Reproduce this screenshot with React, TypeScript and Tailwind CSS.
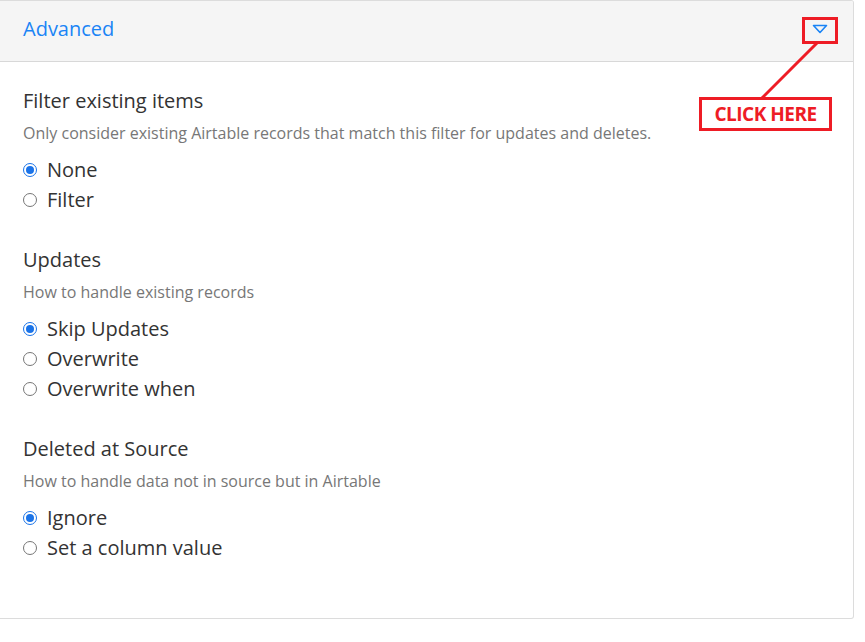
import React from "react";

type Section = { title: string; desc: string; options: string[]; selected: number };

const sections: Section[] = [
  {
    title: "Filter existing items",
    desc: "Only consider existing Airtable records that match this filter for updates and deletes.",
    options: ["None", "Filter"],
    selected: 0,
  },
  {
    title: "Updates",
    desc: "How to handle existing records",
    options: ["Skip Updates", "Overwrite", "Overwrite when"],
    selected: 0,
  },
  {
    title: "Deleted at Source",
    desc: "How to handle data not in source but in Airtable",
    options: ["Ignore", "Set a column value"],
    selected: 0,
  },
];

const Radio = ({ checked }: { checked: boolean }) =>
  checked ? (
    <span className="w-[14px] h-[14px] rounded-full border-[1.5px] border-[#1a73e8] flex items-center justify-center shrink-0">
      <span className="w-[8px] h-[8px] rounded-full bg-[#1a73e8]" />
    </span>
  ) : (
    <span className="w-[14px] h-[14px] rounded-full border border-[#767676] shrink-0" />
  );

const SectionBlock = ({ s, first }: { s: Section; first: boolean }) => (
  <div className={first ? "" : "mt-[32px]"}>
    <div className="text-[20px] leading-[26px] text-[#333]">{s.title}</div>
    <div className="mt-[8px] text-[16px] leading-[22px] text-[#777]">{s.desc}</div>
    <div className="mt-[11px] flex flex-col">
      {s.options.map((o, i) => (
        <label key={o} className="h-[30px] flex items-center gap-[10px] text-[20px] text-[#333]">
          <Radio checked={i === s.selected} />
          <span>{o}</span>
        </label>
      ))}
    </div>
  </div>
);

export default function App() {
  return (
    <div className="relative w-[865px] h-[642px] bg-white" style={{ fontFamily: '"Open Sans", sans-serif' }}>
      <div className="w-[854px] h-[619px] border border-l-0 border-[#dcdcdc] rounded-r-[3px] flex flex-col overflow-hidden">
        <div className="h-[61px] shrink-0 bg-[#f5f5f5] border-b border-[#d8d8d8] flex items-center justify-between pl-[23px] pr-[25px] pb-[5px]">
          <span className="text-[20px] text-[#1a84f5]">Advanced</span>
          <svg width="16" height="10" viewBox="0 0 16 10" className="mt-[1px]">
            <path d="M1.5 1.5 H14.5 L8 8.5 Z" fill="none" stroke="#1a84f5" strokeWidth="1.6" strokeLinejoin="round" />
          </svg>
        </div>
        <div className="pt-[26px] pl-[23px]">
          {sections.map((s, i) => (
            <SectionBlock key={s.title} s={s} first={i === 0} />
          ))}
        </div>
      </div>

      {/* annotation overlay */}
      <div className="absolute left-[802px] top-[17px] w-[36px] h-[27px] border-[3px] border-[#ee1c25]" />
      <svg className="absolute left-0 top-0" width="865" height="642">
        <line x1="817" y1="43" x2="762" y2="98" stroke="#ee1c25" strokeWidth="3" />
      </svg>
      <div className="absolute left-[699px] top-[97px] w-[133px] h-[34px] border-[3px] border-[#ee1c25] bg-white flex items-center justify-center">
        <span className="text-[19px] font-bold text-[#ee1c25] tracking-[-0.5px]">CLICK HERE</span>
      </div>
    </div>
  );
}
